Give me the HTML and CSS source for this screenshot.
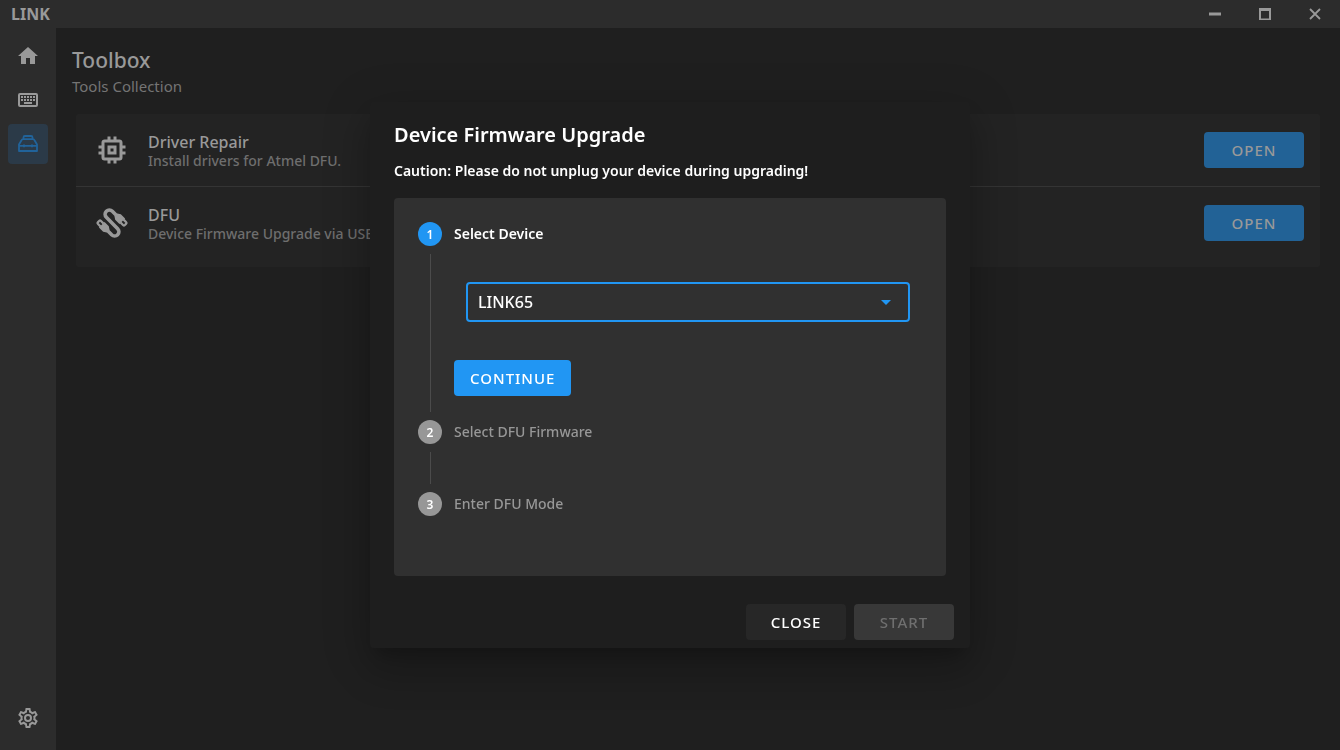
FILE: index.html
```html
<!DOCTYPE html>
<html lang="en">
<head>
<meta charset="utf-8">
<title>LINK</title>
<link rel="stylesheet" href="styles.css">
</head>
<body>
<div class="app">
  <header class="titlebar">
    <span class="brand">LINK</span>
    <div class="window-controls">
      <button class="window-button" type="button" aria-label="Minimize"><svg class="window-icon" viewBox="0 0 16 16"><path d="M2 6.500h12v3H2z"/></svg></button>
      <button class="window-button" type="button" aria-label="Maximize"><svg class="window-icon" viewBox="0 0 16 16"><path fill-rule="evenodd" d="M2 2h12v12H2zM4 5v7.500h8V5z"/></svg></button>
      <button class="window-button" type="button" aria-label="Close window"><svg class="window-icon" viewBox="0 0 16 16"><path d="M3 3l10 10M13 3L3 13" fill="none" stroke="currentColor" stroke-width="1.800"/></svg></button>
    </div>
  </header>
  <div class="body">
    <nav class="sidebar">
      <a class="nav-item" href="#home" aria-label="Home"><svg class="nav-icon" viewBox="0 0 24 24"><path d="M10,20V14H14V20H19V12H22L12,3L2,12H5V20H10Z"/></svg></a>
      <a class="nav-item" href="#keyboard" aria-label="Keyboard"><svg class="nav-icon" viewBox="0 0 24 24"><path d="M4,5A2,2 0 0,0 2,7V17A2,2 0 0,0 4,19H20A2,2 0 0,0 22,17V7A2,2 0 0,0 20,5H4M4,7H20V17H4V7M5,8V10H7V8H5M8,8V10H10V8H8M11,8V10H13V8H11M14,8V10H16V8H14M17,8V10H19V8H17M5,11V13H7V11H5M8,11V13H10V11H8M11,11V13H13V11H11M14,11V13H16V11H14M17,11V13H19V11H17M8,14V16H16V14H8Z"/></svg></a>
      <a class="nav-item nav-item-active" href="#toolbox" aria-label="Toolbox" aria-current="page"><svg class="nav-icon" viewBox="0 0 24 24"><path d="M7.500 6.500V5.200Q7.500 4 9 4h6q1.500 0 1.500 1.200v1.300M7 7.200h10q1 0 1.500 1l2.500 4.300V19H3v-6.500l2.500-4.300q.5-1 1.500-1zM3 13.800h18M8 12.500v2.800M16 12.500v2.800" fill="none" stroke="currentColor" stroke-width="1.800" stroke-linejoin="round"/></svg></a>
      <a class="nav-item nav-item-last" href="#settings" aria-label="Settings"><svg class="nav-icon" viewBox="0 0 24 24"><path d="M12,8A4,4 0 0,1 16,12A4,4 0 0,1 12,16A4,4 0 0,1 8,12A4,4 0 0,1 12,8M12,10A2,2 0 0,0 10,12A2,2 0 0,0 12,14A2,2 0 0,0 14,12A2,2 0 0,0 12,10M10,22C9.75,22 9.54,21.82 9.5,21.58L9.13,18.93C8.5,18.68 7.96,18.34 7.44,17.94L4.95,18.95C4.73,19.03 4.46,18.95 4.34,18.73L2.34,15.27C2.21,15.05 2.27,14.78 2.46,14.63L4.57,12.97L4.5,12L4.57,11L2.46,9.37C2.27,9.22 2.21,8.95 2.34,8.73L4.34,5.27C4.46,5.05 4.73,4.96 4.95,5.05L7.44,6.05C7.96,5.66 8.5,5.32 9.13,5.07L9.5,2.42C9.54,2.18 9.75,2 10,2H14C14.25,2 14.46,2.18 14.5,2.42L14.87,5.07C15.5,5.32 16.04,5.66 16.56,6.05L19.05,5.05C19.27,4.96 19.54,5.05 19.66,5.27L21.66,8.73C21.79,8.95 21.73,9.22 21.54,9.37L19.43,11L19.5,12L19.43,13L21.54,14.63C21.73,14.78 21.79,15.05 21.66,15.27L19.66,18.73C19.54,18.95 19.27,19.04 19.05,18.95L16.56,17.95C16.04,18.34 15.5,18.68 14.87,18.93L14.5,21.58C14.46,21.82 14.25,22 14,22H10M11.25,4L10.88,6.61C9.68,6.86 8.62,7.5 7.85,8.39L5.44,7.35L4.69,8.65L6.8,10.2C6.4,11.37 6.4,12.64 6.8,13.8L4.68,15.36L5.43,16.66L7.86,15.62C8.63,16.5 9.68,17.14 10.87,17.38L11.24,20H12.76L13.13,17.39C14.32,17.14 15.37,16.5 16.14,15.62L18.57,16.66L19.32,15.36L17.2,13.81C17.6,12.64 17.6,11.37 17.2,10.2L19.31,8.65L18.56,7.35L16.15,8.39C15.38,7.5 14.32,6.86 13.12,6.62L12.75,4H11.25Z"/></svg></a>
    </nav>
    <main class="content">
      <h1 class="page-title">Toolbox</h1>
      <p class="page-subtitle">Tools Collection</p>
      <ul class="tool-list">
        <li class="tool">
          <svg class="tool-icon" viewBox="0 0 24 24"><path d="M17,17H7V7H17M21,11V9H19V7C19,5.89 18.1,5 17,5H15V3H13V5H11V3H9V5H7C5.89,5 5,5.89 5,7V9H3V11H5V13H3V15H5V17A2,2 0 0,0 7,19H9V21H11V19H13V21H15V19H17A2,2 0 0,0 19,17V15H21V13H19V11M13,13H11V11H13M15,9H9V15H15V9Z"/></svg>
          <div class="tool-text"><h2 class="tool-name">Driver Repair</h2><p class="tool-note">Install drivers for Atmel DFU.</p></div>
          <button class="button button-open" type="button">OPEN</button>
        </li>
        <li class="tool">
          <svg class="tool-icon" viewBox="0 0 36 36"><g transform="rotate(-45 18 18)"><path d="M9.500 18v8a4.250 4.250 0 0 0 8.500 0V10a4.250 4.250 0 0 1 8.500 0v8" fill="none" stroke="currentColor" stroke-width="3.600"/><path d="M5.500 12h8v6l-2 3h-4l-2-3zM22.500 24h8v-6l-2-3h-4l-2 3z"/><path d="M7.400 12.500V8.500q0-1 1-1h2.200q1 0 1 1v4M24.400 23.500v4q0 1 1 1h2.200q1 0 1-1v-4" fill="none" stroke="currentColor" stroke-width="2.200"/></g></svg>
          <div class="tool-text"><h2 class="tool-name">DFU</h2><p class="tool-note">Device Firmware Upgrade via USB.</p></div>
          <button class="button button-open" type="button">OPEN</button>
        </li>
      </ul>
    </main>
  </div>
</div>
<div class="overlay">
  <section class="dialog" role="dialog" aria-modal="true" aria-labelledby="dialog-title">
    <h2 class="dialog-title" id="dialog-title">Device Firmware Upgrade</h2>
    <p class="dialog-note">Caution: Please do not unplug your device during upgrading!</p>
    <ol class="steps">
      <li class="step step-current">
        <div class="step-head"><span class="step-number">1</span><label class="step-label" for="device">Select Device</label></div>
        <div class="step-body">
          <div class="select-wrap">
            <select class="select" id="device"><option>LINK65</option></select>
            <svg class="select-arrow" viewBox="0 0 24 24"><path d="M7,10L12,15L17,10H7Z"/></svg>
          </div>
          <button class="button button-primary" type="button">CONTINUE</button>
        </div>
      </li>
      <li class="step">
        <div class="step-head"><span class="step-number">2</span><span class="step-label">Select DFU Firmware</span></div>
        <div class="step-body step-body-empty"></div>
      </li>
      <li class="step">
        <div class="step-head"><span class="step-number">3</span><span class="step-label">Enter DFU Mode</span></div>
      </li>
    </ol>
    <div class="dialog-actions">
      <button class="button button-close" type="button">CLOSE</button>
      <button class="button button-start" type="button" disabled>START</button>
    </div>
  </section>
</div>
</body>
</html>
```
FILE: styles.css
```css
* { box-sizing: border-box; }

body {
  margin: 0;
  background: #1f1f1f;
  color: #999;
  font-family: "Noto Sans", "Open Sans", sans-serif;
  font-size: 14px;
  font-weight: 500;
}

h1, h2, p, ul, ol { margin: 0; padding: 0; }
ul, ol { list-style: none; }
button, select { font-family: inherit; }
svg { display: block; flex: none; fill: currentColor; }

.app { display: flex; flex-direction: column; min-height: 100vh; }

.titlebar {
  display: flex;
  align-items: center;
  justify-content: space-between;
  height: 28px;
  padding-left: 11px;
  background: #2c2c2c;
}
.brand { font-size: 16px; font-weight: 700; line-height: 28px; }
.window-controls { display: flex; }
.window-button {
  display: flex;
  align-items: center;
  justify-content: center;
  width: 50px;
  height: 28px;
  padding: 0;
  border: 0;
  background: none;
  color: #999;
}
.window-icon { width: 16px; height: 16px; }

.body { display: flex; flex: 1; }
.sidebar {
  display: flex;
  flex-direction: column;
  gap: 4px;
  width: 56px;
  padding: 8px 8px 12px;
  background: #2c2c2c;
}
.nav-item {
  display: flex;
  align-items: center;
  justify-content: center;
  height: 40px;
  border-radius: 4px;
  color: #999;
}
.nav-item-active { background: #2b3a48; color: #21639a; }
.nav-item-last { margin-top: auto; }
.nav-icon { width: 24px; height: 24px; }

.content { flex: 1; padding: 16px; }
.page-title { font-size: 21px; font-weight: 500; line-height: 32px; }
.page-subtitle { font-size: 15px; font-weight: 400; color: #747474; line-height: 20px; }

.tool-list { margin: 18px 4px 0; padding-bottom: 8px; background: #232323; border-radius: 2px; }
.tool { display: flex; align-items: center; height: 72px; padding: 0 16px 0 18px; }
.tool + .tool { height: 73px; border-top: 1px solid #343434; }
.tool-icon { width: 36px; height: 36px; }
.tool-text { flex: 1; margin-left: 18px; padding-top: 2px; }
.tool-name { font-size: 16px; font-weight: 500; line-height: 19px; }
.tool-note { color: #6e6e6e; line-height: 18px; }

.button {
  min-width: 100px;
  height: 36px;
  padding: 0 16px;
  border: 0;
  border-radius: 4px;
  color: #fff;
  font-size: 15px;
  font-weight: 500;
  line-height: 20px;
  letter-spacing: 1px;
}
.button-open { background: #226296; color: #999; }
.button-primary { background: #2196f3; }
.button-close { background: #272727; }
.button-start { background: #383838; color: #6f6f6f; }

.overlay {
  position: fixed;
  inset: 0;
  display: flex;
  align-items: center;
  justify-content: center;
}
.dialog {
  width: 600px;
  max-width: 90%;
  padding: 16px 16px 8px 24px;
  border-radius: 4px;
  background: #1e1e1e;
  color: #fff;
  box-shadow: 0 11px 15px -7px rgba(0, 0, 0, 0.2), 0 24px 38px 3px rgba(0, 0, 0, 0.14), 0 9px 46px 8px rgba(0, 0, 0, 0.12);
}
.dialog-title { font-size: 20px; font-weight: 600; line-height: 34px; }
.dialog-note { margin-top: 8px; font-weight: 600; line-height: 22px; }

.steps {
  min-height: 378px;
  margin: 16px 8px 0 0;
  padding: 24px 36px 24px 24px;
  border-radius: 4px;
  background: #303030;
}
.step-head { display: flex; align-items: center; gap: 12px; height: 24px; }
.step-number {
  display: flex;
  align-items: center;
  justify-content: center;
  width: 24px;
  height: 24px;
  border-radius: 50%;
  background: #979797;
  color: #fff;
  font-size: 12px;
  font-weight: 600;
}
.step-label { color: #979797; line-height: 20px; }
.step-current .step-number { background: #2196f3; }
.step-current .step-label { color: #fff; font-weight: 600; }
.step-body { margin: 8px 0 8px 12px; padding: 28px 0 16px 23px; border-left: 1px solid #4b4b4b; }
.step-body-empty { height: 32px; padding: 0; }

.select-wrap { position: relative; margin: 0 0 38px 12px; }
.select {
  display: block;
  width: 100%;
  height: 40px;
  padding: 0 10px;
  border: 2px solid #2196f3;
  border-radius: 4px;
  background: #303030;
  color: #fff;
  font-size: 16px;
  font-weight: 500;
  appearance: none;
}
.select-arrow {
  position: absolute;
  top: 8px;
  right: 12px;
  width: 24px;
  height: 24px;
  color: #2196f3;
  pointer-events: none;
}

.dialog-actions { display: flex; justify-content: flex-end; gap: 8px; margin-top: 28px; }
```
